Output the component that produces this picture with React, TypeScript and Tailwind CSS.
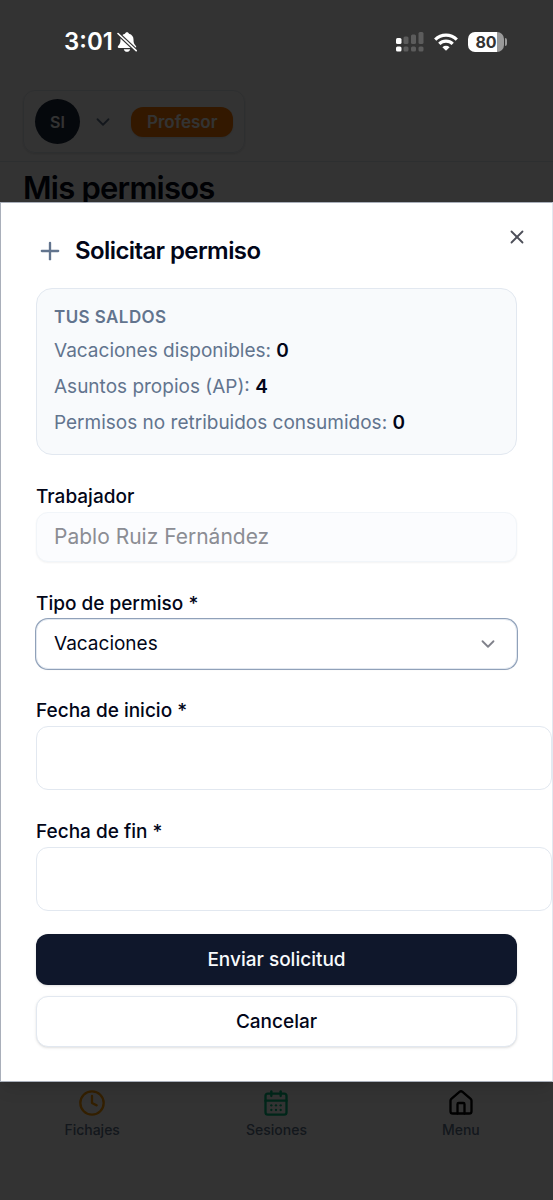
import { useState } from "react";
import { CalendarDays, ChevronDown, Clock, House, Plus, X } from "lucide-react";

const balances = [
    { label: "Vacaciones disponibles:", value: 0 },
    { label: "Asuntos propios (AP):", value: 4 },
    { label: "Permisos no retribuidos consumidos:", value: 0 },
];

const leaveTypes = ["Vacaciones", "Asuntos propios", "Permiso no retribuido"];

const navItems = [
    { label: "Fichajes", icon: Clock, color: "text-amber-500" },
    { label: "Sesiones", icon: CalendarDays, color: "text-emerald-500" },
    { label: "Menu", icon: House, color: "text-black" },
];

const labelClass = "text-[19px] leading-[29px] font-medium text-slate-950";
const dateClass =
    "h-16 w-[calc(100%+35px)] rounded-xl border border-slate-200 bg-white px-4 text-[19px] text-slate-950 outline-none";

function BellOff() {
    return (
        <svg viewBox="0 0 20 20" className="size-5" aria-hidden="true">
            <path
                d="M10 .3c-1 0-1.800.6-2 1.500C5 2.600 3.500 4.900 3.500 7.600c0 3.400-.6 4.500-2.200 6.100-1 1-.6 2.300.7 2.300h16c1.300 0 1.700-1.300.7-2.300-1.600-1.600-2.200-2.700-2.200-6.100 0-2.700-1.500-5-4.500-5.800C11.800.9 11 .3 10 .3ZM6.800 17.200h6.400c-.2 1.500-1.500 2.600-3.200 2.600s-3-1.100-3.200-2.600Z"
                fill="#fff"
            />
            <path d="M.5 1 19.500 19" stroke="#333" strokeWidth="3.800" />
            <path d="M1 1.500 19.200 18.700" stroke="#fff" strokeWidth="1.600" strokeLinecap="round" />
        </svg>
    );
}

function Signal() {
    return (
        <svg viewBox="0 0 28 20" className="h-5 w-7" aria-hidden="true">
            <g fill="#fff">
                <rect x="0" y="6" width="5.500" height="6" rx="1.500" />
                <rect x="0" y="14.500" width="5.500" height="5" rx="1.500" />
            </g>
            <g fill="#5c5c5c">
                <rect x="7.500" y="4.500" width="5" height="7.500" rx="1.500" />
                <rect x="15" y="2.500" width="5" height="9.500" rx="1.500" />
                <rect x="22.500" y="0" width="5" height="12" rx="1.500" />
                <rect x="7.500" y="14.500" width="5" height="5" rx="1.500" />
                <rect x="15" y="14.500" width="5" height="5" rx="1.500" />
                <rect x="22.500" y="14.500" width="5" height="5" rx="1.500" />
            </g>
        </svg>
    );
}

function Wifi() {
    return (
        <svg viewBox="0 0 24 18" className="h-[18px] w-6" aria-hidden="true" fill="none" stroke="#fff" strokeWidth="3.200">
            <path d="M1.200 6.600a15.400 15.400 0 0 1 21.600 0" />
            <path d="M5.300 10.800a9.500 9.500 0 0 1 13.400 0" />
            <path d="M12 17.800 8.400 14.200a5.100 5.100 0 0 1 7.200 0Z" fill="#fff" stroke="none" />
        </svg>
    );
}

function StatusBar() {
    return (
        <div className="flex h-[83px] items-center justify-between bg-[#333333] pr-[46px] pl-16">
            <div className="flex items-center gap-1">
                <span className="text-2xl font-semibold text-white">3:01</span>
                <BellOff />
            </div>
            <div className="flex items-center gap-[10px]">
                <Signal />
                <Wifi />
                <div className="flex items-center gap-px">
                    <span className="flex h-5 w-9 items-center justify-center rounded-[7px] bg-linear-to-r from-white from-80% to-[#9a9a9a] to-80% text-base font-bold text-[#333333]">
                        80
                    </span>
                    <span className="h-2 w-[2px] rounded-r-full bg-[#9a9a9a]" />
                </div>
            </div>
        </div>
    );
}

function Page() {
    return (
        <div className="col-start-1 row-start-1 flex flex-col justify-between bg-white">
            <div>
                <header className="border-b border-slate-200 px-[23px] pt-[7px] pb-2">
                    <div className="flex w-fit items-center rounded-xl border border-slate-200 px-[11px] py-2 shadow-sm">
                        <span className="flex size-[45px] items-center justify-center rounded-full bg-slate-800 text-base font-semibold text-white">
                            SI
                        </span>
                        <button type="button" aria-label="Abrir menú de usuario" className="mr-[17px] ml-3 text-slate-500">
                            <ChevronDown className="size-[22px]" />
                        </button>
                        <span className="rounded-xl bg-[#ff7a00] px-4 text-[17px] leading-[30px] font-semibold text-white shadow-sm">
                            Profesor
                        </span>
                    </div>
                </header>
                <h1 className="px-[23px] pt-1 text-[31px] leading-[44px] font-semibold tracking-tight text-slate-950">
                    Mis permisos
                </h1>
            </div>
            <nav className="grid grid-cols-3 pb-[60px]">
                {navItems.map(({ label, icon: Icon, color }) => (
                    <a key={label} href="#" className="flex flex-col items-center gap-[3px]">
                        <Icon className={`size-7 ${color}`} />
                        <span className="text-sm font-medium text-slate-500">{label}</span>
                    </a>
                ))}
            </nav>
        </div>
    );
}

function RequestDialog() {
    const [leaveType, setLeaveType] = useState("Vacaciones");
    const [startDate, setStartDate] = useState("");
    const [endDate, setEndDate] = useState("");

    return (
        <div
            role="dialog"
            aria-labelledby="dialog-title"
            className="relative w-full overflow-hidden border border-[#a9afba] border-r-slate-200 bg-white px-[35px] pt-[33px] pb-[34px] shadow-lg"
        >
            <div className="flex h-[30px] items-center gap-[11px]">
                <Plus className="size-7 text-slate-500" />
                <h2 id="dialog-title" className="text-2xl font-semibold tracking-tight text-slate-950">
                    Solicitar permiso
                </h2>
            </div>
            <button type="button" aria-label="Cerrar" className="absolute top-[23px] right-6 text-[#4d4f59]">
                <X className="size-[22px]" />
            </button>

            <form onSubmit={(e) => e.preventDefault()}>
                <div className="mt-[22px] rounded-2xl border border-slate-200 bg-slate-50 p-[17px]">
                    <p className="text-[17px] leading-[22px] font-semibold tracking-wide text-slate-500 uppercase">Tus saldos</p>
                    <div className="mt-2 space-y-[7px]">
                        {balances.map((b) => (
                            <p key={b.label} className="text-[19px] leading-[29px] text-slate-500">
                                {b.label} <strong className="font-semibold text-slate-950">{b.value}</strong>
                            </p>
                        ))}
                    </div>
                </div>

                <div className="mt-[27px] flex flex-col gap-[27px]">
                    <div className="flex flex-col gap-px">
                        <label htmlFor="worker" className={labelClass}>Trabajador</label>
                        <input
                            id="worker"
                            defaultValue="Pablo Ruiz Fernández"
                            disabled
                            className="h-[50px] w-full rounded-xl border border-slate-100 bg-[#fbfcfe] px-[17px] text-[21px] text-[#8b8d94] shadow-xs"
                        />
                    </div>

                    <div className="flex flex-col gap-px">
                        <label htmlFor="type" className={labelClass}>Tipo de permiso *</label>
                        <div className="grid items-center">
                            <select
                                id="type"
                                value={leaveType}
                                onChange={(e) => setLeaveType(e.target.value)}
                                className="col-start-1 row-start-1 h-[50px] w-full appearance-none rounded-xl border border-slate-200 bg-white px-[17px] text-[19px] leading-[30px] text-slate-950 shadow-xs ring-1 ring-slate-400 outline-none"
                            >
                                {leaveTypes.map((type) => (
                                    <option key={type}>{type}</option>
                                ))}
                            </select>
                            <ChevronDown className="pointer-events-none col-start-1 row-start-1 mr-[18px] size-[22px] justify-self-end text-[#80828b]" />
                        </div>
                    </div>

                    <div className="flex flex-col gap-px">
                        <label htmlFor="start" className={labelClass}>Fecha de inicio *</label>
                        <input id="start" value={startDate} onChange={(e) => setStartDate(e.target.value)} className={dateClass} />
                    </div>

                    <div className="flex flex-col gap-px">
                        <label htmlFor="end" className={labelClass}>Fecha de fin *</label>
                        <input id="end" value={endDate} onChange={(e) => setEndDate(e.target.value)} className={dateClass} />
                    </div>
                </div>

                <div className="mt-[23px] flex flex-col gap-[11px]">
                    <button type="submit" className="h-[51px] rounded-xl bg-slate-900 text-[19px] leading-[29px] font-medium text-slate-50 shadow-sm">
                        Enviar solicitud
                    </button>
                    <button type="button" className="h-[51px] rounded-xl border border-slate-200 bg-white text-[19px] leading-[29px] font-medium text-slate-950 shadow-sm">
                        Cancelar
                    </button>
                </div>
            </form>
        </div>
    );
}

export default function App() {
    return (
        <div className="flex min-h-screen flex-col bg-[#333333] font-['Inter',sans-serif]">
            <StatusBar />
            <main className="grid flex-1 grid-cols-1">
                <Page />
                <div className="z-10 col-start-1 row-start-1 flex items-center bg-black/80">
                    <RequestDialog />
                </div>
            </main>
        </div>
    );
}
